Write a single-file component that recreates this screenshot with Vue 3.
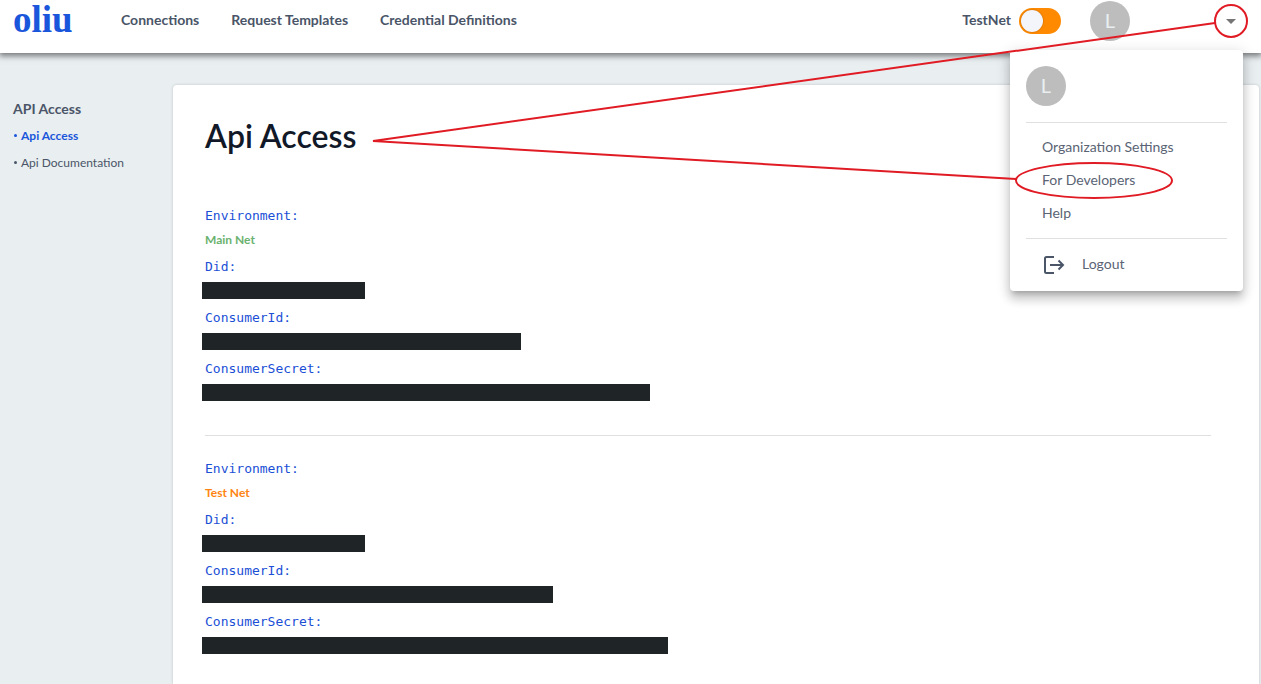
<script setup>
import { ref } from 'vue'

const testNet = ref(false)

const navItems = ['Connections', 'Request Templates', 'Credential Definitions']

const sideItems = [
  { label: 'Api Access', active: true },
  { label: 'Api Documentation', active: false },
]

const environments = [
  {
    name: 'Main Net',
    tone: 'main',
    fields: [
      { label: 'Did:', width: 163 },
      { label: 'ConsumerId:', width: 319 },
      { label: 'ConsumerSecret:', width: 448 },
    ],
  },
  {
    name: 'Test Net',
    tone: 'test',
    fields: [
      { label: 'Did:', width: 163 },
      { label: 'ConsumerId:', width: 351 },
      { label: 'ConsumerSecret:', width: 466 },
    ],
  },
]

const menuItems = ['Organization Settings', 'For Developers', 'Help']
</script>

<template>
  <div class="page">
    <header class="topbar">
      <a class="logo" href="#">oliu</a>
      <nav class="nav">
        <a v-for="item in navItems" :key="item" href="#">{{ item }}</a>
      </nav>
      <div class="account">
        <label class="net">
          <span>TestNet</span>
          <input v-model="testNet" class="switch" type="checkbox" role="switch" />
        </label>
        <span class="avatar">L</span>
        <button class="caret" type="button" aria-label="Account menu">
          <svg viewBox="0 0 24 24" width="24" height="24"><path d="M7 10l5 5 5-5z" /></svg>
        </button>
      </div>
    </header>

    <div class="body">
      <aside class="side">
        <h2>API Access</h2>
        <ul>
          <li v-for="item in sideItems" :key="item.label" :class="{ active: item.active }">
            <span class="dot"></span><a href="#">{{ item.label }}</a>
          </li>
        </ul>
      </aside>

      <main class="panel">
        <h1>Api Access</h1>
        <section v-for="env in environments" :key="env.name" class="env">
          <div class="label">Environment:</div>
          <div class="name" :class="env.tone">{{ env.name }}</div>
          <div v-for="field in env.fields" :key="field.label" class="field">
            <div class="label">{{ field.label }}</div>
            <div class="redacted" :style="{ width: field.width + 'px' }"></div>
          </div>
        </section>
      </main>
    </div>

    <div class="menu">
      <span class="avatar">L</span>
      <ul class="links">
        <li v-for="item in menuItems" :key="item"><a href="#">{{ item }}</a></li>
      </ul>
      <button class="logout" type="button">
        <svg viewBox="0 0 24 24" width="24" height="24">
          <path d="M12 4H4.500Q3 4 3 5.500V18.500Q3 20 4.500 20H12M8 12H21M16.500 7.500L21 12L16.500 16.500" />
        </svg>
        <span>Logout</span>
      </button>
    </div>

    <svg class="notes" viewBox="0 0 1261 220" preserveAspectRatio="none" aria-hidden="true">
      <path d="M1215 23L373 141L1016 179" />
      <ellipse cx="1231" cy="21" rx="16" ry="16" />
      <ellipse cx="1094" cy="180.500" rx="78" ry="17.500" />
    </svg>
  </div>
</template>

<style>
body {
  background: #e9eef1;
}
</style>

<style scoped>
.page {
  position: relative;
  display: flex;
  flex-direction: column;
  min-height: 100vh;
  background: #e9eef1;
  color: #4a5568;
  font-family: Lato, "Liberation Sans", sans-serif;
  font-size: 14px;
}
a {
  color: inherit;
  text-decoration: none;
}
ul {
  list-style: none;
  margin: 0;
  padding: 0;
}
button {
  border: 0;
  padding: 0;
  background: none;
  color: inherit;
  font: inherit;
}
.topbar {
  display: flex;
  flex-shrink: 0;
  align-items: flex-start;
  height: 53px;
  padding: 0 18px 0 13px;
  box-sizing: border-box;
  background: #fff;
  box-shadow: 0 2px 6px 1px rgba(0, 0, 0, 0.5);
  position: relative;
  font-weight: 700;
}
.logo {
  width: 108px;
  line-height: 40px;
  font-family: "Liberation Serif", serif;
  font-size: 37px;
  color: #1a56db;
}
.nav {
  display: flex;
  gap: 32px;
  line-height: 40px;
}
.account {
  display: flex;
  align-items: center;
  margin-left: auto;
  height: 42px;
}
.net {
  display: flex;
  align-items: center;
  gap: 8px;
  margin-right: 29px;
}
.net span {
  padding-bottom: 3px;
}
.switch {
  appearance: none;
  display: flex;
  width: 42px;
  height: 26px;
  margin: 0;
  padding: 2px;
  box-sizing: border-box;
  border-radius: 13px;
  background: #ff8a00;
}
.switch::before {
  content: "";
  width: 22px;
  height: 22px;
  border-radius: 50%;
  background: #f4f5fa;
  box-shadow: 0 0 2px rgba(0, 0, 0, 0.3);
}
.switch:checked {
  justify-content: flex-end;
}
.avatar {
  display: flex;
  align-items: center;
  justify-content: center;
  width: 40px;
  height: 40px;
  padding-bottom: 3px;
  box-sizing: border-box;
  border-radius: 50%;
  background: #bdbdbd;
  color: #e9eef1;
  font-size: 20px;
  font-weight: 400;
}
.caret {
  width: 24px;
  height: 24px;
  margin-left: 89px;
}
.caret svg {
  display: block;
  fill: #757575;
}
.body {
  display: flex;
  flex: 1;
  padding: 32px 2px 0 0;
}
.side {
  flex: 0 0 173px;
  padding: 12px 0 0 13px;
  box-sizing: border-box;
}
.side h2 {
  margin: 0 0 1px;
  font-size: 14px;
  line-height: 24px;
}
.side li {
  display: flex;
  align-items: center;
  gap: 4px;
  padding-left: 1px;
  font-size: 12px;
  line-height: 27px;
}
.side .active {
  color: #1a56db;
  font-weight: 700;
}
.dot {
  width: 3px;
  height: 3px;
  border-radius: 50%;
  background: currentColor;
}
.panel {
  flex: 1;
  padding: 32px 48px 16px 32px;
  border-radius: 4px 4px 0 0;
  background: #fff;
  box-shadow: 0 0 3px rgba(0, 0, 0, 0.18);
}
h1 {
  margin: 0 0 47px;
  color: #111827;
  font-size: 32px;
  font-weight: 600;
  line-height: 38px;
}
.env + .env {
  margin-top: 34px;
  padding-top: 19px;
  border-top: 1px solid #e0e0e0;
}
.label {
  color: #1a4fd6;
  font-family: "DejaVu Sans Mono", monospace;
  font-size: 13px;
  line-height: 27px;
}
.name {
  margin-bottom: 3px;
  font-size: 12px;
  font-weight: 700;
  line-height: 21px;
}
.main {
  color: #6ab26e;
}
.test {
  color: #ff8412;
}
.redacted {
  height: 17px;
  margin: 2px 0 5px -3px;
  background: #1f2427;
}
.menu {
  position: absolute;
  top: 50px;
  right: 18px;
  width: 233px;
  padding: 16px;
  box-sizing: border-box;
  border-radius: 4px;
  background: #fff;
  box-shadow: 0 5px 5px -3px rgba(0, 0, 0, 0.2), 0 8px 10px 1px rgba(0, 0, 0, 0.14),
    0 3px 14px 2px rgba(0, 0, 0, 0.12);
  color: #5a6474;
}
.links {
  margin: 16px 0 0;
  padding: 7px 16px 9px;
  border: solid #e0e0e0;
  border-width: 1px 0;
  line-height: 33px;
}
.logout {
  display: flex;
  align-items: center;
  gap: 16px;
  margin: 14px 0 -2px 16px;
}
.logout span {
  padding-bottom: 3px;
}
.logout svg {
  fill: none;
  stroke: #4a5568;
  stroke-width: 2;
}
.notes {
  position: absolute;
  top: 0;
  left: 0;
  width: 100%;
  height: 220px;
  pointer-events: none;
  fill: none;
  stroke: #e01b24;
  stroke-width: 2;
}
.notes * {
  vector-effect: non-scaling-stroke;
}
</style>
